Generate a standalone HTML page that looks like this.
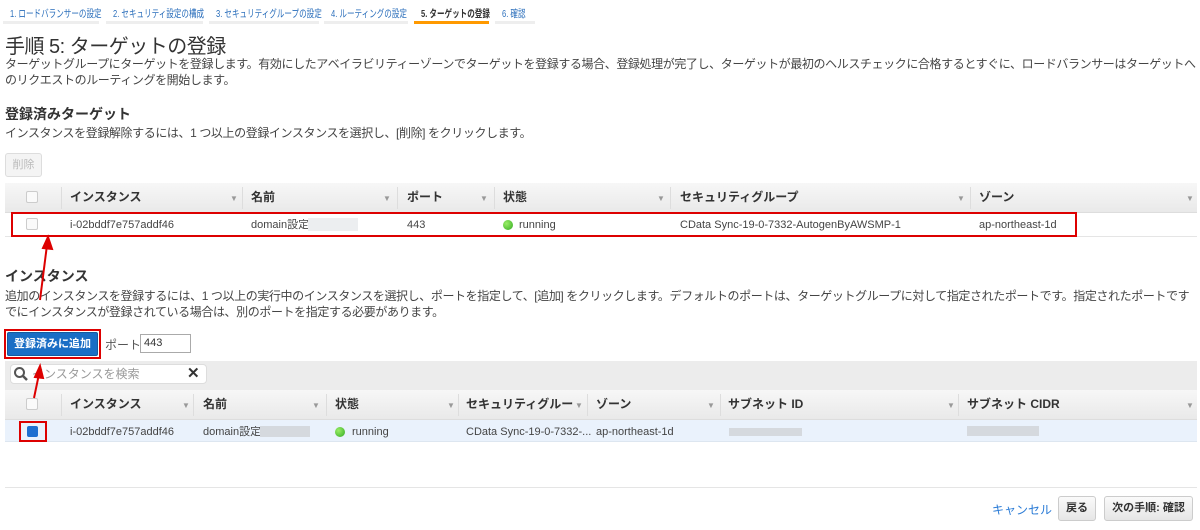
<!DOCTYPE html>
<html><head><meta charset="utf-8"><style>
*{margin:0;padding:0;box-sizing:border-box}
body{width:1200px;height:530px;position:relative;background:#fff;font-family:"Liberation Sans","Noto Sans CJK JP",sans-serif;color:#444;font-size:12px;overflow:hidden}
.a{position:absolute;white-space:nowrap}
.tab{position:absolute;top:0;height:24px;border-bottom:3px solid #eee;font-size:10.5px;color:#2a6ebb;padding:8px 0 0 7px;white-space:nowrap;line-height:12px}
.tab span{display:inline-block;transform:scaleX(0.72);transform-origin:left}
.th{position:absolute;height:30px;background:linear-gradient(#f7f7f7,#e9e9e9);border-bottom:1px solid #ddd}
.hc{position:absolute;font-weight:bold;font-size:12px;color:#333;white-space:nowrap;line-height:14px}
.dd{position:absolute;font-size:8px;color:#999}
.bd{position:absolute;width:1px;background:#ddd}
.cb{position:absolute;width:12px;height:12px;border:1px solid #ccc;border-radius:2px;background:#fafafa}
.cell{position:absolute;font-size:11px;color:#444;white-space:nowrap;line-height:13px}
.blur{position:absolute;background:#d5d9de}
.p{position:absolute;font-size:12px;line-height:16px;letter-spacing:-0.4px;width:1195px}
</style></head><body>
<div class="tab" style="left:3px;width:96px"><span>1. ロードバランサーの設定</span></div>
<div class="tab" style="left:106px;width:97px"><span>2. セキュリティ設定の構成</span></div>
<div class="tab" style="left:209px;width:110px"><span>3. セキュリティグループの設定</span></div>
<div class="tab" style="left:324px;width:84px"><span>4. ルーティングの設定</span></div>
<div class="tab" style="left:414px;width:75px;border-color:#f90;color:#333;font-weight:bold"><span>5. ターゲットの登録</span></div>
<div class="tab" style="left:495px;width:40px"><span>6. 確認</span></div>

<div class="a" style="left:5px;top:36px;font-size:20px;line-height:23px;letter-spacing:-0.5px;color:#333">手順 5: ターゲットの登録</div>
<div class="p" style="left:5px;top:56px">ターゲットグループにターゲットを登録します。有効にしたアベイラビリティーゾーンでターゲットを登録する場合、登録処理が完了し、ターゲットが最初のヘルスチェックに合格するとすぐに、ロードバランサーはターゲットへのリクエストのルーティングを開始します。</div>

<div class="a" style="left:5px;top:104px;font-size:14px;font-weight:bold;color:#333">登録済みターゲット</div>
<div class="a" style="left:5px;top:124px;font-size:12px;letter-spacing:-0.4px">インスタンスを登録解除するには、1 つ以上の登録インスタンスを選択し、[削除] をクリックします。</div>
<div class="a" style="left:5px;top:153px;width:37px;height:24px;border:1px solid #ddd;border-radius:3px;background:#f4f4f4;color:#bbb;font-size:11px;text-align:center;line-height:22px">削除</div>

<div class="th" style="left:5px;top:183px;width:1192px"></div>
<div class="cb" style="left:26px;top:191px"></div>
<div class="bd" style="left:61px;top:187px;height:22px"></div>
<div class="hc" style="left:70px;top:190px">インスタンス</div><div class="dd" style="left:230px;top:194px">▼</div><div class="bd" style="left:242px;top:187px;height:22px"></div>
<div class="hc" style="left:251px;top:190px">名前</div><div class="dd" style="left:383px;top:194px">▼</div><div class="bd" style="left:397px;top:187px;height:22px"></div>
<div class="hc" style="left:407px;top:190px">ポート</div><div class="dd" style="left:480px;top:194px">▼</div><div class="bd" style="left:494px;top:187px;height:22px"></div>
<div class="hc" style="left:503px;top:190px">状態</div><div class="dd" style="left:657px;top:194px">▼</div><div class="bd" style="left:670px;top:187px;height:22px"></div>
<div class="hc" style="left:680px;top:190px">セキュリティグループ</div><div class="dd" style="left:957px;top:194px">▼</div><div class="bd" style="left:970px;top:187px;height:22px"></div>
<div class="hc" style="left:979px;top:190px">ゾーン</div><div class="dd" style="left:1186px;top:194px">▼</div>
<div class="a" style="left:5px;top:236px;width:1192px;height:1px;background:#e5e5e5"></div>
<div class="cb" style="left:26px;top:218px"></div>
<div class="cell" style="left:70px;top:219px">i-02bddf7e757addf46</div>
<div class="cell" style="left:251px;top:219px">domain設定</div><div class="blur" style="left:308px;top:218px;width:50px;height:13px;background:#eceef0"></div>
<div class="cell" style="left:407px;top:219px">443</div>
<div class="a" style="left:503px;top:220px;width:10px;height:10px;border-radius:50%;background:radial-gradient(circle at 35% 35%,#9e6,#3a2)"></div>
<div class="cell" style="left:519px;top:219px">running</div>
<div class="cell" style="left:680px;top:219px">CData Sync-19-0-7332-AutogenByAWSMP-1</div>
<div class="cell" style="left:979px;top:219px">ap-northeast-1d</div>
<div class="a" style="left:11px;top:212px;width:1066px;height:25px;border:2px solid #d00"></div>

<div class="a" style="left:5px;top:266px;font-size:14px;font-weight:bold;color:#333">インスタンス</div>
<div class="p" style="left:5px;top:288px">追加のインスタンスを登録するには、1 つ以上の実行中のインスタンスを選択し、ポートを指定して、[追加] をクリックします。デフォルトのポートは、ターゲットグループに対して指定されたポートです。指定されたポートですでにインスタンスが登録されている場合は、別のポートを指定する必要があります。</div>

<div class="a" style="left:4px;top:329px;width:97px;height:30px;border:2px solid #d00"></div>
<div class="a" style="left:7px;top:332px;width:91px;height:24px;background:#1a6ec5;border:1px solid #155a9e;border-radius:2px;color:#fff;font-weight:bold;font-size:11px;text-align:center;line-height:22px">登録済みに追加</div>
<div class="a" style="left:105px;top:336px;font-size:12px;color:#555">ポート</div>
<div class="a" style="left:140px;top:334px;width:51px;height:19px;border:1px solid #aaa;font-size:11px;line-height:17px;padding:0 3px;color:#333">443</div>

<div class="a" style="left:5px;top:361px;width:1192px;height:29px;background:#ececec"></div>
<div class="a" style="left:10px;top:364px;width:197px;height:20px;background:#fff;border:1px solid #ddd;border-radius:4px"></div>
<svg class="a" style="left:13px;top:366px" width="16" height="16"><circle cx="6.5" cy="6.5" r="4.5" fill="none" stroke="#555" stroke-width="2"/><line x1="10" y1="10" x2="14" y2="14" stroke="#555" stroke-width="2.5"/></svg>
<div class="a" style="left:32px;top:367px;font-size:12px;line-height:14px;color:#999">インスタンスを検索</div>
<div class="a" style="left:187px;top:365px;font-size:15px;line-height:17px;font-weight:bold;color:#333">✕</div>

<div class="th" style="left:5px;top:390px;width:1192px"></div>
<div class="cb" style="left:26px;top:398px"></div>
<div class="bd" style="left:61px;top:394px;height:22px"></div>
<div class="hc" style="left:70px;top:397px">インスタンス</div><div class="dd" style="left:182px;top:401px">▼</div><div class="bd" style="left:193px;top:394px;height:22px"></div>
<div class="hc" style="left:203px;top:397px">名前</div><div class="dd" style="left:312px;top:401px">▼</div><div class="bd" style="left:326px;top:394px;height:22px"></div>
<div class="hc" style="left:335px;top:397px">状態</div><div class="dd" style="left:447px;top:401px">▼</div><div class="bd" style="left:458px;top:394px;height:22px"></div>
<div class="hc" style="left:466px;top:397px">セキュリティグルー</div><div class="dd" style="left:575px;top:401px">▼</div><div class="bd" style="left:587px;top:394px;height:22px"></div>
<div class="hc" style="left:596px;top:397px">ゾーン</div><div class="dd" style="left:707px;top:401px">▼</div><div class="bd" style="left:720px;top:394px;height:22px"></div>
<div class="hc" style="left:728px;top:397px">サブネット ID</div><div class="dd" style="left:947px;top:401px">▼</div><div class="bd" style="left:958px;top:394px;height:22px"></div>
<div class="hc" style="left:967px;top:397px">サブネット CIDR</div><div class="dd" style="left:1186px;top:401px">▼</div>

<div class="a" style="left:5px;top:420px;width:1192px;height:22px;background:#eaf2fc;border-bottom:1px solid #dde6f0"></div>
<div class="a" style="left:19px;top:421px;width:28px;height:21px;border:2px solid #d00"></div>
<div class="a" style="left:27px;top:426px;width:11px;height:11px;background:#1e6fd0;border-radius:2px"></div>
<div class="cell" style="left:70px;top:426px">i-02bddf7e757addf46</div>
<div class="cell" style="left:203px;top:426px">domain設定</div><div class="blur" style="left:260px;top:426px;width:50px;height:11px"></div>
<div class="a" style="left:335px;top:427px;width:10px;height:10px;border-radius:50%;background:radial-gradient(circle at 35% 35%,#9e6,#3a2)"></div>
<div class="cell" style="left:352px;top:426px">running</div>
<div class="cell" style="left:466px;top:426px">CData Sync-19-0-7332-...</div>
<div class="cell" style="left:596px;top:426px">ap-northeast-1d</div>
<div class="blur" style="left:729px;top:428px;width:73px;height:8px"></div>
<div class="blur" style="left:967px;top:426px;width:72px;height:10px"></div>

<div class="a" style="left:5px;top:487px;width:1192px;height:1px;background:#e5e5e5"></div>
<div class="a" style="left:992px;top:501px;font-size:12px;color:#2a7bd6">キャンセル</div>
<div class="a" style="left:1058px;top:496px;width:38px;height:25px;border:1px solid #ccc;border-radius:3px;background:linear-gradient(#fafafa,#e6e6e6);font-size:11px;font-weight:bold;color:#333;text-align:center;line-height:23px">戻る</div>
<div class="a" style="left:1104px;top:496px;width:89px;height:25px;border:1px solid #ccc;border-radius:3px;background:linear-gradient(#fafafa,#e6e6e6);font-size:11px;font-weight:bold;color:#333;text-align:center;line-height:23px">次の手順: 確認</div>

<svg class="a" style="left:0;top:0" width="1200" height="530">
<g stroke="#d00" stroke-width="2" fill="#d00">
<line x1="40" y1="300" x2="47" y2="245"/><polygon points="48,237 43,248 52,249"/>
<line x1="34" y1="398" x2="39" y2="374"/><polygon points="40,366 35,377 43,378"/>
</g></svg>
</body></html>
